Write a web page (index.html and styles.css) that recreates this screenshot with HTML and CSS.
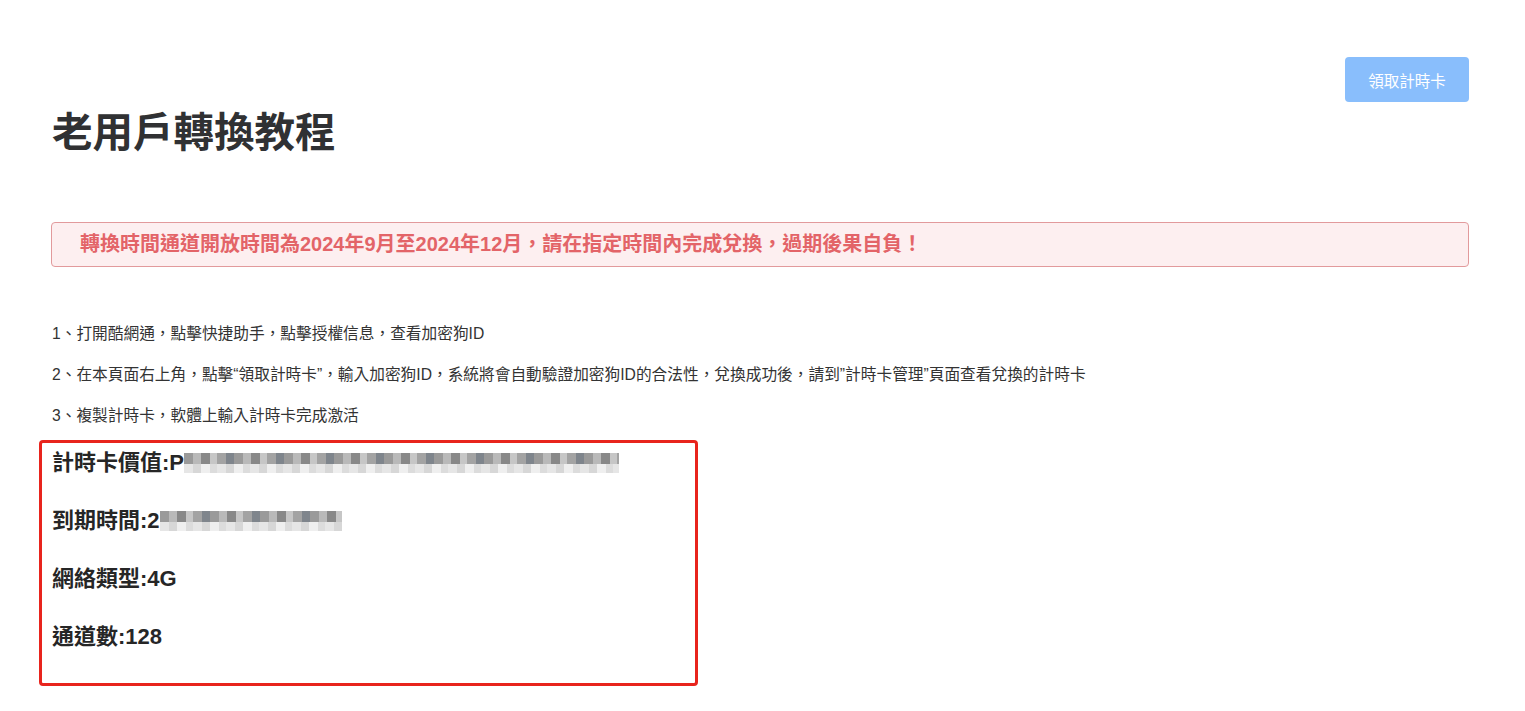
FILE: index.html
```html
<!DOCTYPE html>
<html lang="zh-Hant">
<head>
  <meta charset="UTF-8">
  <title>老用戶轉換教程</title>
  <link rel="stylesheet" href="styles.css">
</head>
<body>
  <div class="page">
    <!-- 頂部按鈕 -->
    <div class="topbar">
      <button class="btn-card" disabled>領取計時卡</button>
    </div>

    <h1 class="title">老用戶轉換教程</h1>

    <!-- 提示 -->
    <div class="alert">轉換時間通道開放時間為2024年9月至2024年12月，請在指定時間內完成兌換，過期後果自負！</div>

    <!-- 步驟 -->
    <div class="steps">
      <p>1、打開酷網通，點擊快捷助手，點擊授權信息，查看加密狗ID</p>
      <p>2、在本頁面右上角，點擊“領取計時卡”，輸入加密狗ID，系統將會自動驗證加密狗ID的合法性，兌換成功後，請到”計時卡管理”頁面查看兌換的計時卡</p>
      <p>3、複製計時卡，軟體上輸入計時卡完成激活</p>
    </div>

    <!-- 計時卡資訊 -->
    <div class="card-info">
      <h3>計時卡價值:P<span class="mosaic mosaic-long"></span></h3>
      <h3>到期時間:2<span class="mosaic mosaic-short"></span></h3>
      <h3>網絡類型:4G</h3>
      <h3>通道數:128</h3>
    </div>
  </div>
</body>
</html>
```

FILE: styles.css
```css
/* 基本 */
body {
  margin: 0;
  font-family: "Liberation Sans", "Noto Sans CJK TC", sans-serif;
  color: #303133;
  background: #fff;
}

.page {
  padding: 0 56px 0 51px;
}

/* === 頂部 === */
.topbar {
  display: flex;
  justify-content: flex-end;
  padding-top: 57px;
}
.btn-card {
  width: 124px;
  height: 45px;
  background: #89befc;
  color: #fff;
  border: none;
  border-radius: 4px;
  font-family: inherit;
  font-size: 15.5px;
}

.title {
  margin: 7px 0 0 1px;
  font-size: 40.5px;
  line-height: 48px;
  font-weight: bold;
  color: #303133;
}

/* === 提示 === */
.alert {
  margin-top: 65px;
  height: 43px;
  line-height: 43px;
  padding-left: 28px;
  background: #fdeff0;
  border: 1px solid #e29a9c;
  border-radius: 4px;
  color: #e36468;
  font-size: 20px;
  font-weight: bold;
}

/* === 步驟 === */
.steps {
  margin-top: 57px;
}
.steps p {
  margin: 0 0 21px 1px;
  font-size: 15.7px;
  line-height: 20px;
  color: #333;
}

/* === 計時卡資訊 === */
.card-info {
  width: 643px;
  margin: -7px 0 0 -12px;
  padding: 5px 0 31px 10px;
  border: 3px solid #e8241d;
  border-radius: 4px;
}
.card-info h3 {
  margin: 0 0 28px;
  font-size: 22px;
  line-height: 30px;
  font-weight: bold;
  color: #262626;
}
.card-info h3:last-child {
  margin-bottom: 0;
}

/* 打碼 */
.mosaic {
  display: inline-block;
  height: 20px;
  vertical-align: -3px;
  background:
    repeating-linear-gradient(90deg, #9a9a9a 0 9px, #b9b9b9 9px 17px, #888 17px 26px, #c6c6c6 26px 33px, #a3a3a3 33px 42px, #7f858c 42px 50px) 0 0 / 100% 11px no-repeat,
    repeating-linear-gradient(90deg, #e6e6e6 0 9px, #d7d7d7 9px 17px, #efefef 17px 26px, #dcdcdc 26px 33px) 0 11px / 100% 9px no-repeat;
}
.mosaic-long {
  width: 435px;
}
.mosaic-short {
  width: 182px;
}
```
